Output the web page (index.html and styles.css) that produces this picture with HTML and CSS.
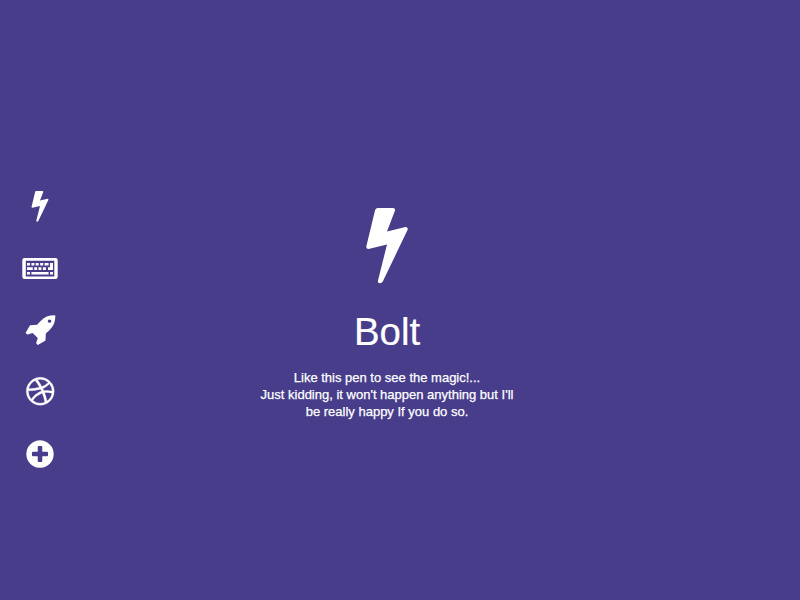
FILE: index.html
```
<!DOCTYPE html>
<html lang="en">
<head>
<meta charset="utf-8">
<title>Bolt</title>
<link rel="stylesheet" href="styles.css">
</head>
<body>
<nav class="menu">
  <a class="item"><svg width="18" height="31" viewBox="0 0 42 76"><path d="M11.500 0H27Q29.500 0 29 2.500L21 23.500L39.500 19Q42.500 19 41.500 22L16.800 73.500Q15 76 13 75Q11.500 74.500 12 72.500L21 36.500L2.500 41Q0 41 .3 38.500L9 2.500Q9.500 0 11.500 0Z"/></svg></a>
  <a class="item"><svg width="36" height="21" viewBox="0 0 36 21"><path fill-rule="evenodd" d="M2.500 0H33.500Q35.700 0 35.700 2.200V18.800Q35.700 21 33.500 21H2.500Q.3 21 .3 18.800V2.200Q.3 0 2.500 0ZM3.800 2.800V18.400H32.300V2.800Z"/><path d="M5 5h3v2.400H5zM9.400 5h3v2.400h-3zM13.700 5h3v2.400h-3zM18.200 5h3v2.400h-3zM22.600 5h4v2.400h-4zM28 5h3v7h-5V9.200h2zM5 9.200h5.800V12H5zM12.200 9.200h2.900V12h-2.900zM16.500 9.200h2.900V12h-2.900zM20.900 9.200h3V12h-3zM5 13.900h3v2.700H5zM9.400 13.900h17.200v2.700H9.400zM28 13.900h3v2.700h-3z"/></svg></a>
  <a class="item"><svg class="raised" width="32.500" height="32.500" viewBox="-64 0 1792 1792"><path d="M1440 448q0-40-28-68t-68-28-68 28-28 68 28 68 68 28 68-28 28-68zm224-288q0 249-75.500 430.500t-253.500 360.500q-81 80-195 176l-20 379q-2 16-16 26l-384 224q-7 4-16 4-12 0-23-9l-64-64q-13-14-8-32l85-276-281-281-276 85q-3 1-9 1-14 0-23-9l-64-64q-17-19-5-39l224-384q10-14 26-16l379-20q96-114 176-195 188-187 358-258t431-71q14 0 24 9.500t10 22.500z"/></svg></a>
  <a class="item"><svg class="raised" width="32.500" height="32.500" viewBox="0 0 1792 1792"><path stroke="#fff" stroke-width="20" d="M1152 1500q-42-241-140-498h-2l-2 1q-16 6-43 16.500t-101 49-137 82-131 114.500-103 148l-15-11q184 150 418 150 132 0 256-52zm-185-607q-21-49-53-111-311 93-673 93-1 7-1 21 0 124 44 236.500t124 201.500q50-89 123.500-166.500t142.500-124.500 130.500-81 99.500-48l37-13q4-1 13-3.500t13-4.500zm-107-212q-120-213-244-378-138 65-234 186t-128 272q302 0 606-80zm684 319q-210-60-409-29 87 239 128 469 111-75 185-189.500t96-250.500zm-805-741q-1 0-2 1 1-1 2-1zm590 145q-185-164-433-164-76 0-155 19 131 170 246 382 69-26 130-60.500t96.500-61.500 65.500-57 37.500-40.500zm223 485q-3-232-149-410l-1 1q-9 12-19 24.500t-43.500 44.500-71 60.500-100 65-131.500 64.500q25 53 44 95 2 5 6.500 17t7.500 17q36-5 74.500-7t73.500-2 69 1.500 64 4 56.500 5.500 48 6.500 36.500 6 25 4.500zm112 7q0 209-103 385.500t-279.500 279.500-385.500 103-385.500-103-279.500-279.500-103-385.500 103-385.500 279.500-279.500 385.500-103 385.500 103 279.500 279.500 103 385.500z"/></svg></a>
  <a class="item"><svg width="32" height="32" viewBox="0 0 1792 1792"><path d="M1344 960v-128q0-26-19-45t-45-19h-256v-256q0-26-19-45t-45-19h-128q-26 0-45 19t-19 45v256h-256q-26 0-45 19t-19 45v128q0 26 19 45t45 19h256v256q0 26 19 45t45 19h128q26 0 45-19t19-45v-256h256q26 0 45-19t19-45zm320-64q0 209-103 385.500t-279.500 279.500-385.500 103-385.500-103-279.500-279.500-103-385.500 103-385.500 279.500-279.500 385.500-103 385.500 103 279.500 279.500 103 385.500z"/></svg></a>
</nav>
<main class="panel">
  <svg class="hero" width="42" height="76" viewBox="0 0 42 76"><path d="M11.500 0H27Q29.500 0 29 2.500L21 23.500L39.500 19Q42.500 19 41.500 22L16.800 73.500Q15 76 13 75Q11.500 74.500 12 72.500L21 36.500L2.500 41Q0 41 .3 38.500L9 2.500Q9.500 0 11.500 0Z"/></svg>
  <h1 class="title">Bolt</h1>
  <p class="text">Like this pen to see the magic!...<br>Just kidding, it won't happen anything but I'll<br>be really happy If you do so.</p>
</main>
</body>
</html>
```
FILE: styles.css
```
body {
  margin: 0;
  height: 600px;
  display: flex;
  overflow: hidden;
  background: #483d8b;
  color: #fff;
  font-family: "Liberation Sans", Arial, sans-serif;
}

svg {
  display: block;
  fill: #fff;
}

.menu {
  width: 80px;
  flex: none;
  box-sizing: border-box;
  padding-top: 176px;
}

.item {
  height: 61.75px;
  display: flex;
  align-items: center;
  justify-content: center;
}

.raised {
  margin-bottom: 2px;
}

.panel {
  width: 614px;
  flex: none;
  box-sizing: border-box;
  padding-top: 208px;
  display: flex;
  flex-direction: column;
  align-items: center;
}

.hero {
  margin-right: 1px;
}

.title {
  margin: 25px 0 0;
  font-size: 38.4px;
  line-height: 46px;
  font-weight: 400;
  -webkit-text-stroke: 0.2px #fff;
}

.text {
  margin: 14px 0 0;
  font-size: 13px;
  line-height: 17px;
  text-align: center;
  -webkit-text-stroke: 0.25px #fff;
}
```
